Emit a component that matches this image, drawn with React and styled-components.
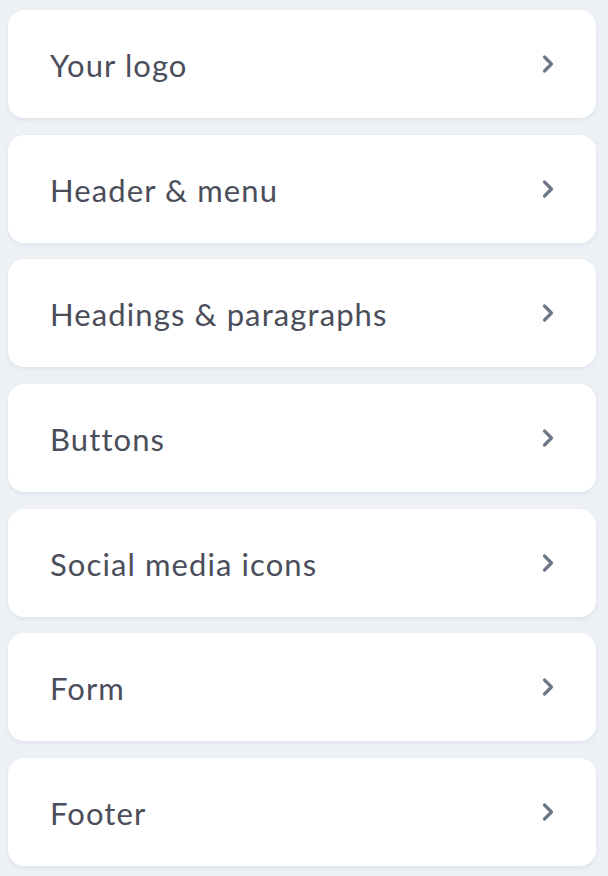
import React from 'react'
import styled, { createGlobalStyle } from 'styled-components'

const GlobalStyle = createGlobalStyle`
  html, body {
    margin: 0;
    padding: 0;
    background: #edf1f6;
  }
`

const List = styled.div`
  display: flex;
  flex-direction: column;
  gap: 16.7px;
  padding: 10px 12px 10px 8px;
  font-family: Lato, "Noto Sans", sans-serif;
`

const Card = styled.button`
  display: flex;
  align-items: center;
  justify-content: space-between;
  height: 108px;
  padding: 0 41px 0 42px;
  border: none;
  border-radius: 16px;
  background: #fff;
  box-shadow: 0 2px 4px rgba(40, 60, 90, 0.07);
  font-family: inherit;
  font-size: 31px;
  color: #4b4e5a;
  text-align: left;
  cursor: pointer;
`

const Label = styled.span`
  letter-spacing: 1.1px;
  padding-top: 2px;
`

const Chevron = () => (
  <svg width="14" height="22" viewBox="0 0 14 22" fill="none">
    <path d="M3.5 4 L10.5 11 L3.5 18" stroke="#6c7786" strokeWidth="3.2" strokeLinecap="round" strokeLinejoin="round" />
  </svg>
)

const items = [
  'Your logo',
  'Header & menu',
  'Headings & paragraphs',
  'Buttons',
  'Social media icons',
  'Form',
  'Footer',
]

export default function App() {
  return (
    <>
      <GlobalStyle />
      <List>
        {items.map((t) => (
          <Card key={t}>
            <Label>{t}</Label>
            <Chevron />
          </Card>
        ))}
      </List>
    </>
  )
}
